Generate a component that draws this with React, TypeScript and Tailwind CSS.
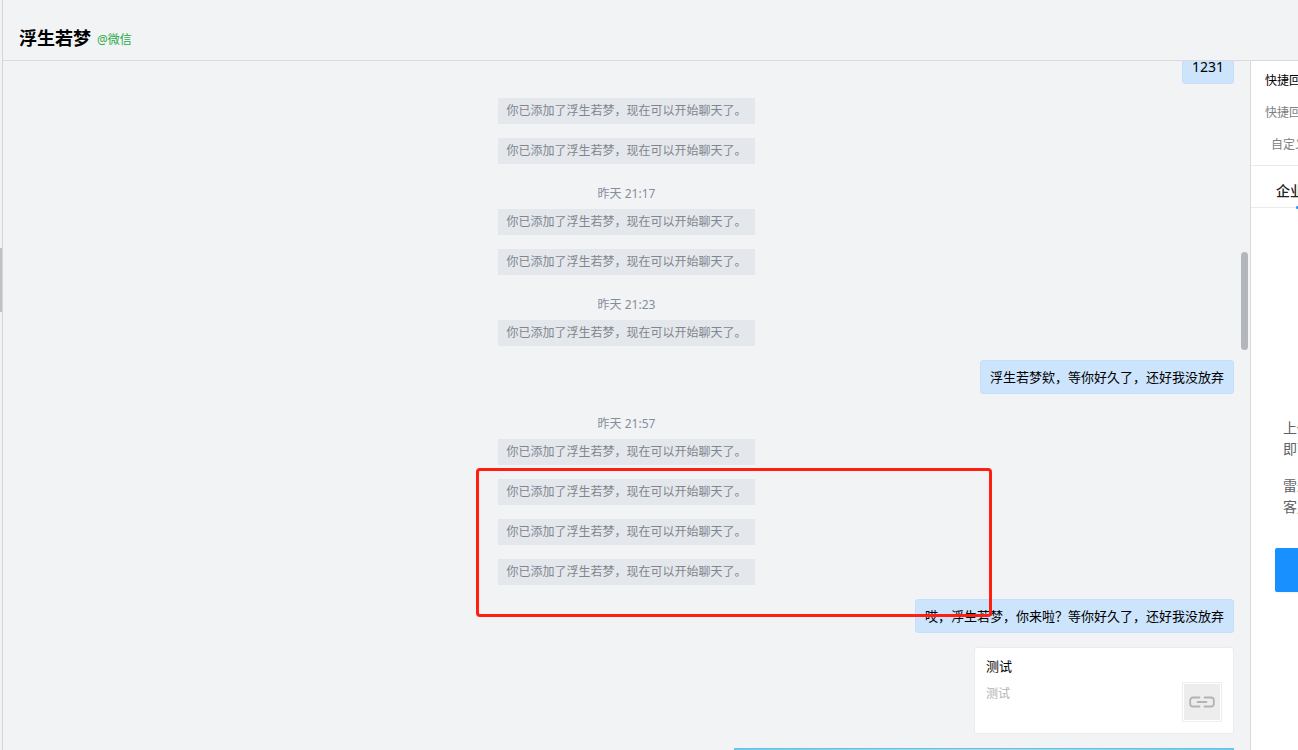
import React from 'react';

type Message =
    | { type: 'system' }
    | { type: 'time'; text: string }
    | { type: 'number'; text: string }
    | { type: 'text'; text: string }
    | { type: 'link'; title: string; desc: string }
    | { type: 'image' };

const messages: Message[] = [
    { type: 'number', text: '1231' },
    { type: 'system' },
    { type: 'system' },
    { type: 'time', text: '昨天 21:17' },
    { type: 'system' },
    { type: 'system' },
    { type: 'time', text: '昨天 21:23' },
    { type: 'system' },
    { type: 'text', text: '浮生若梦欸，等你好久了，还好我没放弃' },
    { type: 'time', text: '昨天 21:57' },
    { type: 'system' },
    { type: 'system' },
    { type: 'system' },
    { type: 'system' },
    { type: 'text', text: '哎，浮生若梦，你来啦？等你好久了，还好我没放弃' },
    { type: 'link', title: '测试', desc: '测试' },
    { type: 'image' },
];

const LinkIcon = () => (
    <svg viewBox="0 0 26 12" className="w-[26px] h-3" fill="none" stroke="#b3b3b3" strokeWidth="1.8" strokeLinecap="round">
        <path d="M10.5 1.5H4a2.8 2.8 0 0 0-2.8 2.8v3.4a2.8 2.8 0 0 0 2.8 2.8h6.5" />
        <path d="M15.5 1.5H22a2.8 2.8 0 0 1 2.8 2.8v3.4a2.8 2.8 0 0 1-2.8 2.8h-6.5" />
        <path d="M8.5 6h9" />
    </svg>
);

const MessageRow = ({ message }: { message: Message }) => {
    switch (message.type) {
        case 'time':
            return <time className="self-center text-xs leading-[31px] text-[#868e9c]">{message.text}</time>;
        case 'system':
            return (
                <p className="self-center mb-3.5 px-2 bg-[#e4e7ec] text-xs leading-[26px] text-[#80868e]">
                    你已添加了浮生若梦，现在可以开始聊天了。
                </p>
            );
        case 'number':
            return (
                <p className="self-end mb-3.5 px-[9px] rounded-[3px] border border-[#c3dffd] bg-[#cce4fc] text-sm leading-8 text-black">
                    {message.text}
                </p>
            );
        case 'text':
            return (
                <p className="self-end mb-3.5 px-[9px] rounded-[3px] border border-[#c3dffd] bg-[#cce4fc] text-[13px] leading-8 text-black">
                    {message.text}
                </p>
            );
        case 'link':
            return (
                <a href="#" className="self-end mb-3.5 w-[260px] h-[87px] shrink-0 flex justify-between rounded-[3px] border border-[#ececee] bg-white px-[11px]">
                    <div className="pt-1.5">
                        <h3 className="text-[13px] leading-6 text-black">{message.title}</h3>
                        <p className="mt-1 text-xs leading-6 text-[#b3b3b3]">{message.desc}</p>
                    </div>
                    <div className="self-end mb-[11px] w-10 h-10 border border-[#eeeeee] p-px">
                        <div className="w-full h-full bg-[#ededed] flex items-center justify-center">
                            <LinkIcon />
                        </div>
                    </div>
                </a>
            );
        case 'image':
            return <div className="self-end w-[500px] h-[280px] shrink-0 border-t border-[#6bbfe0] bg-linear-to-r from-[#74c9ef] via-[#a5def0] to-[#74c9ef]" />;
    }
};

const Sidebar = () => (
    <aside className="w-12 shrink-0 overflow-hidden whitespace-nowrap border-l border-[#d9dadc] bg-white">
        <section className="pl-3.5 py-1 border-b border-[#ebebeb] text-xs leading-8">
            <h2 className="text-black">快捷回复</h2>
            <p className="text-[#808080]">快捷回复</p>
            <p className="pl-1.5 text-[#808080]">自定义</p>
        </section>
        <nav className="relative h-[42px] flex items-center pl-[25px] pt-2 border-b border-[#ebebeb] text-sm">
            <button className="font-medium text-[#222222]">企业</button>
            <span className="absolute left-[45px] -bottom-0.5 w-6 h-[3px] rounded-full bg-[#1890ff]" />
        </nav>
        <div className="pt-[209px] pl-6">
            <div className="pl-2 text-sm leading-[21px] text-[#606266]">
                <p>上传<br />即可</p>
                <p className="mt-4">雷达<br />客户</p>
            </div>
            <button aria-label="上传" className="mt-[31px] block w-40 h-11 rounded-xs bg-[#1890ff] shadow-xs" />
        </div>
    </aside>
);

export default function App() {
    return (
        <div className='h-screen flex overflow-hidden bg-[#f1f3f5] font-["Noto_Sans","Noto_Sans_CJK_SC",sans-serif]' lang="zh-CN">
            <div className="w-[3px] shrink-0 border-r border-[#d3d5d9] pt-[248px]">
                <div className="h-16 bg-[#c1c1c1]" />
            </div>
            <div className="flex-1 min-w-0 flex flex-col">
                <header className="h-[61px] shrink-0 flex items-end gap-1.5 pl-4 pb-2 border-b border-[#d9dadd]">
                    <h1 className="text-lg leading-7 font-bold text-black">浮生若梦</h1>
                    <span className="text-xs leading-6 text-[#2bab4b]">@微信</span>
                </header>
                <div className="flex-1 min-h-0 flex">
                    <main className="relative flex-1 min-w-0 overflow-hidden">
                        <div className="-mt-[11px] px-4 flex flex-col">
                            {messages.map((message, i) => (
                                <MessageRow key={i} message={message} />
                            ))}
                        </div>
                        <div className="absolute left-[473px] top-[407px] w-[516px] h-[149px] rounded-sm border-3 border-[#ff1e10]" />
                        <div className="absolute right-0.5 top-[191px] w-[7px] h-[98px] rounded-full bg-[#b3b7bb]" />
                    </main>
                    <Sidebar />
                </div>
            </div>
        </div>
    );
}
